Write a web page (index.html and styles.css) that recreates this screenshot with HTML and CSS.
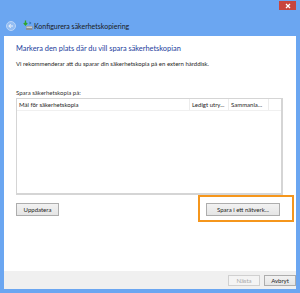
FILE: index.html
```html
<!DOCTYPE html>
<html lang="sv">
<head>
    <meta charset="UTF-8">
    <title>Konfigurera säkerhetskopiering</title>
    <link rel="stylesheet" href="styles.css">
</head>
<body>
    <div class="window">
        <div class="titlebar">
            <span class="back-btn">
                <svg width="8" height="8" viewBox="0 0 10 10">
                    <path d="M7.5 5H2.5M4.6 2.8L2.5 5l2.1 2.2" fill="none" stroke="#e8f0fb" stroke-width="1.3"/>
                </svg>
            </span>
            <span class="app-icon">
                <svg width="10" height="11" viewBox="0 0 10 11">
                    <rect x="3" y="6" width="6.5" height="4" rx="0.8" fill="#8a8f96"/>
                    <rect x="3.5" y="6.5" width="5.5" height="1.5" fill="#c9ccd1"/>
                    <path d="M2.5 0.5v4M0.8 3l1.7 2 1.7-2" fill="none" stroke="#2fa52b" stroke-width="1.3"/>
                    <path d="M6.5 1.5l2 1.5-2 1.5z" fill="#2f6fb8"/>
                </svg>
            </span>
            <span class="title">Konfigurera säkerhetskopiering</span>
            <span class="close-btn">
                <svg width="6" height="6" viewBox="0 0 6 6">
                    <path d="M1 1l4 4M5 1L1 5" stroke="#fff" stroke-width="1.3"/>
                </svg>
            </span>
        </div>

        <div class="content">
            <h1 class="heading">Markera den plats där du vill spara säkerhetskopian</h1>
            <p class="intro">Vi rekommenderar att du sparar din säkerhetskopia på en extern hårddisk.</p>

            <div class="list-label">Spara säkerhetskopia på:</div>
            <div class="listbox">
                <div class="list-header">
                    <span class="col col-name">Mål för säkerhetskopia</span>
                    <span class="col col-free">Ledigt utry...</span>
                    <span class="col col-total">Sammanla...</span>
                    <span class="col col-rest"></span>
                </div>
            </div>

            <div class="button-row">
                <button class="btn btn-refresh">Uppdatera</button>
                <div class="highlight-wrap">
                    <button class="btn btn-network">Spara i ett nätverk...</button>
                    <span class="highlight"></span>
                </div>
            </div>
        </div>

        <div class="footer">
            <button class="btn btn-small" disabled>Nästa</button>
            <button class="btn btn-small">Avbryt</button>
        </div>
    </div>
</body>
</html>
```

FILE: styles.css
```css
* {
    box-sizing: border-box;
}

html {
    background: #6ba6f1;
}

body {
    margin: 0;
    background: #6ba6f1;
    font-family: Lato, "Open Sans", sans-serif;
    color: #1e1e1e;
}

.window {
    width: 300px;
    height: 293px;
    display: flex;
    flex-direction: column;
    background: #6ba6f1;
    padding: 0 4px 4px 4px;
}

.titlebar {
    height: 36px;
    flex-shrink: 0;
    display: flex;
    align-items: center;
    position: relative;
    padding-top: 15px;
}

.back-btn {
    width: 10px;
    height: 10px;
    border-radius: 50%;
    background: #93bdf3;
    border: 1px solid #b8d4f8;
    display: flex;
    align-items: center;
    justify-content: center;
    margin-left: 2px;
}

.app-icon {
    display: flex;
    margin-left: 7px;
    margin-top: -1px;
}

.title {
    font-size: 7px;
    line-height: 10px;
    margin-left: 1px;
    color: #1a1a1a;
}

.close-btn {
    position: absolute;
    top: 1px;
    right: 0;
    width: 17px;
    height: 9px;
    background: #c8453d;
    display: flex;
    align-items: center;
    justify-content: center;
}

.content {
    flex: 1;
    background: #fff;
    padding: 7px 13px 0 12px;
    display: flex;
    flex-direction: column;
}

.heading {
    margin: 0;
    font-size: 7.4px;
    line-height: 12px;
    font-weight: normal;
    color: #1c3d9c;
    white-space: nowrap;
}

.intro {
    margin: 5px 0 0;
    font-size: 6px;
    line-height: 8px;
    white-space: nowrap;
}

.list-label {
    margin-top: 21px;
    font-size: 6px;
    line-height: 8px;
    color: #333;
}

.listbox {
    margin-top: 1px;
    height: 97px;
    flex-shrink: 0;
    border: 1px solid #d5d5d5;
    border-right-width: 2px;
    border-bottom-width: 2px;
}

.list-header {
    display: flex;
    height: 12px;
    border-bottom: 1px solid #f0f0f0;
}

.col {
    font-size: 6px;
    line-height: 11px;
    padding-left: 2px;
    white-space: nowrap;
    overflow: hidden;
}

.col-name {
    width: 172px;
}

.col-free {
    width: 39px;
    border-left: 1px solid #ececec;
}

.col-total {
    width: 40px;
    border-left: 1px solid #ececec;
}

.col-rest {
    flex: 1;
    border-left: 1px solid #ececec;
}

.button-row {
    margin-top: 8px;
    display: flex;
    justify-content: space-between;
    align-items: flex-start;
}

.btn {
    display: block;
    font-family: inherit;
    font-size: 6px;
    line-height: 8px;
    padding: 0;
    color: #1e1e1e;
    background: linear-gradient(#f2f2f2, #e5e5e5);
    border: 1px solid #adadad;
    border-radius: 0;
}

.btn-refresh {
    width: 43px;
    height: 13px;
}

.highlight-wrap {
    display: flex;
    position: relative;
    margin-right: 3px;
}

.btn-network {
    width: 74px;
    height: 13px;
}

.highlight {
    position: absolute;
    left: -8px;
    top: -8px;
    right: -14px;
    bottom: -6px;
    border: 2px solid #f5961c;
}

.footer {
    height: 18px;
    flex-shrink: 0;
    background: #f0f0f0;
    display: flex;
    justify-content: flex-end;
    align-items: center;
    gap: 4px;
    padding-top: 1px;
}

.btn-small {
    width: 32px;
    height: 11px;
}

.btn-small:disabled {
    color: #a8a8a8;
    border-color: #d0d0d0;
    background: #f4f4f4;
}
```
